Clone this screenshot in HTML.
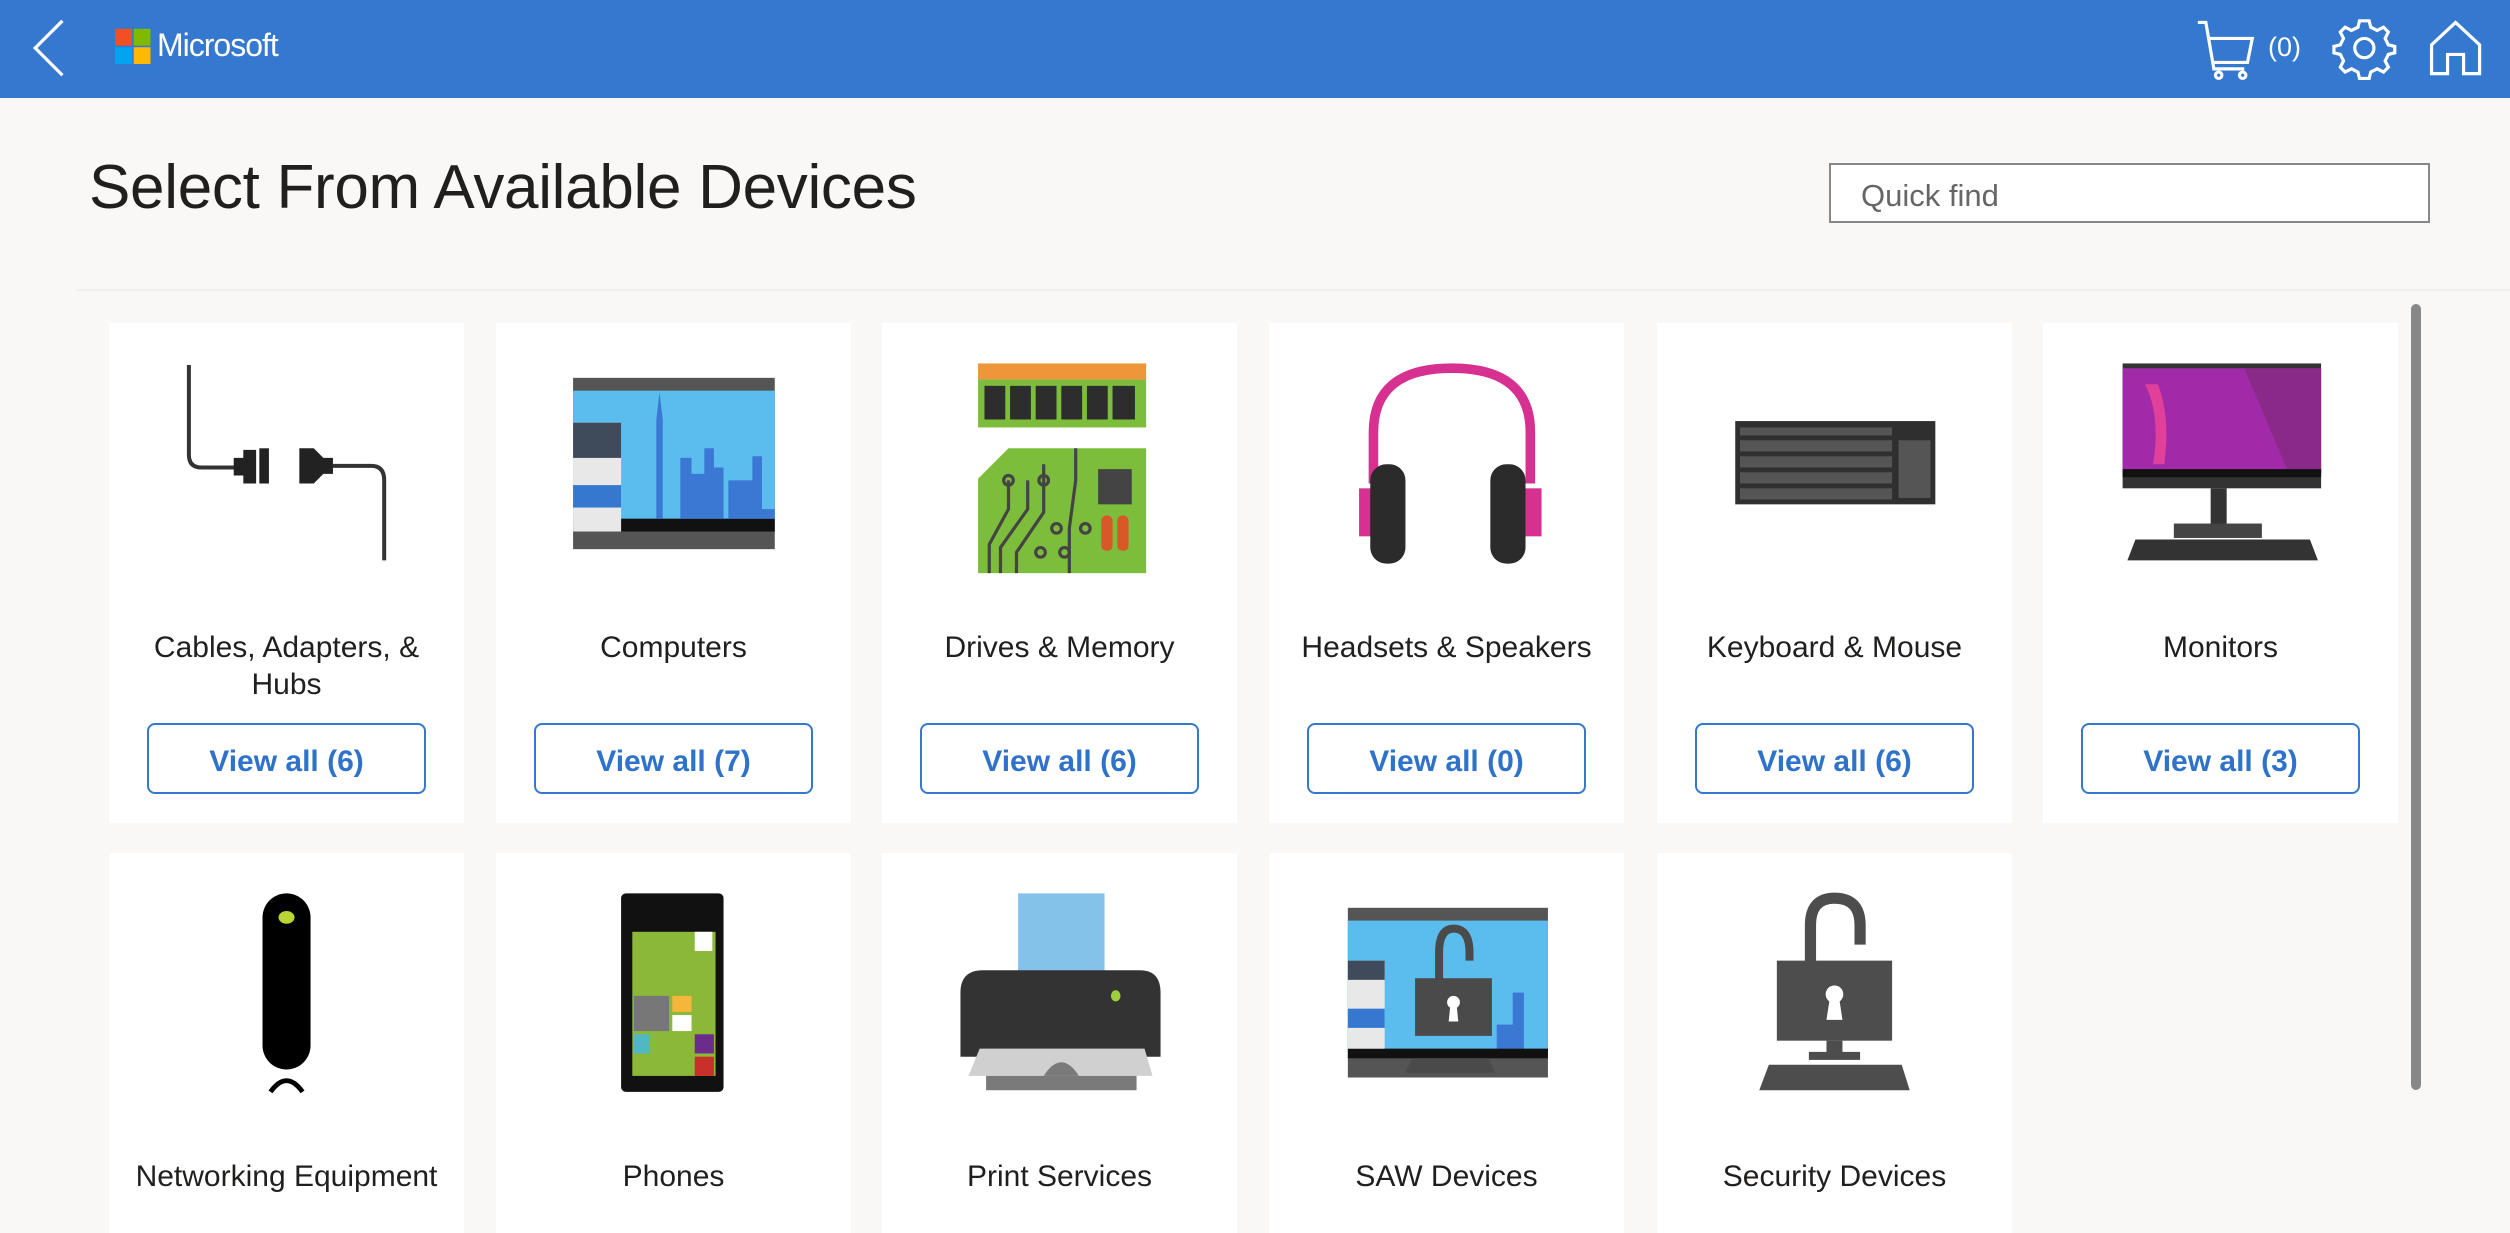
<!DOCTYPE html>
<html><head><meta charset="utf-8"><style>
*{margin:0;padding:0;box-sizing:border-box}
body{width:2510px;height:1228px;background:#f9f8f6;font-family:"Liberation Sans",sans-serif;position:relative;overflow:hidden}
.hdr{position:absolute;left:0;top:0;width:2510px;height:98px;background:#3578cf}
.ms{position:absolute;left:157px;top:27px;color:#fff;font-size:32px;letter-spacing:-1px}
.cnt{position:absolute;left:2268px;top:32px;color:#fff;font-size:27px}
h1{position:absolute;left:89px;top:152px;font-size:62px;font-weight:normal;color:#201f1e;letter-spacing:-0.3px}
.qf{position:absolute;left:1829px;top:163px;width:601px;height:60px;border:2px solid #888;background:#fff;color:#666;font-size:31px;padding:13px 0 0 30px}
.sep{position:absolute;left:76px;top:289px;width:2434px;height:2px;background:#efeeec}
.card{position:absolute;width:355px;background:#fff}
.lbl{position:absolute;left:0;width:355px;text-align:center;font-size:30px;color:#201f1e;line-height:37px}
.btn{position:absolute;left:38px;width:279px;height:71px;border:2px solid #3578cf;border-radius:8px;color:#2f72c9;font-size:30px;font-weight:bold;text-align:center;line-height:74px}
.sb{position:absolute;left:2411px;top:304px;width:10px;height:786px;background:#888;border-radius:5px}
svg.ov{position:absolute;left:0;top:0;width:2510px;height:1228px}
</style></head><body>
<div class="hdr"></div>
<div class="ms">Microsoft</div>
<div class="cnt">(0)</div>
<h1>Select From Available Devices</h1>
<div class="qf">Quick find</div>
<div class="sep"></div>

<div class="card" style="left:109px;top:323px;height:500px"><div class="lbl" style="top:306px">Cables, Adapters, &amp;<br>Hubs</div><div class="btn" style="top:400px">View all (6)</div></div>
<div class="card" style="left:496px;top:323px;height:500px"><div class="lbl" style="top:306px">Computers</div><div class="btn" style="top:400px">View all (7)</div></div>
<div class="card" style="left:882px;top:323px;height:500px"><div class="lbl" style="top:306px">Drives &amp; Memory</div><div class="btn" style="top:400px">View all (6)</div></div>
<div class="card" style="left:1269px;top:323px;height:500px"><div class="lbl" style="top:306px">Headsets &amp; Speakers</div><div class="btn" style="top:400px">View all (0)</div></div>
<div class="card" style="left:1657px;top:323px;height:500px"><div class="lbl" style="top:306px">Keyboard &amp; Mouse</div><div class="btn" style="top:400px">View all (6)</div></div>
<div class="card" style="left:2043px;top:323px;height:500px"><div class="lbl" style="top:306px">Monitors</div><div class="btn" style="top:400px">View all (3)</div></div>

<div class="card" style="left:109px;top:853px;height:380px"><div class="lbl" style="top:305px">Networking Equipment</div></div>
<div class="card" style="left:496px;top:853px;height:380px"><div class="lbl" style="top:305px">Phones</div></div>
<div class="card" style="left:882px;top:853px;height:380px"><div class="lbl" style="top:305px">Print Services</div></div>
<div class="card" style="left:1269px;top:853px;height:380px"><div class="lbl" style="top:305px">SAW Devices</div></div>
<div class="card" style="left:1657px;top:853px;height:380px"><div class="lbl" style="top:305px">Security Devices</div></div>
<div class="sb"></div>

<svg class="ov" viewBox="0 0 1568 767" preserveAspectRatio="none">
<path d="M39 13 L22 30 L39 47" fill="none" stroke="#fff" stroke-width="2"/>
<rect x="72" y="18" width="10.5" height="10.5" fill="#f25022"/><rect x="83.5" y="18" width="10.5" height="10.5" fill="#7fba00"/>
<rect x="72" y="29.5" width="10.5" height="10.5" fill="#00a4ef"/><rect x="83.5" y="29.5" width="10.5" height="10.5" fill="#ffb900"/>
<g fill="none" stroke="#fff" stroke-width="2">
<path d="M1373 14 H1378 L1383 43 H1402 M1380 24 H1407 L1404 39 H1382"/><circle cx="1386" cy="47" r="2"/><circle cx="1401" cy="47" r="2"/>
<circle cx="1477" cy="30" r="6"/>
<path d="M1477 13 l3 0 l1 4 l4 2 l4 -2 l3 3 l-2 4 l2 4 l4 1 l0 4 l-4 1 l-2 4 l2 4 l-3 3 l-4 -2 l-4 2 l-1 4 l-3 0 l-3 0 l-1 -4 l-4 -2 l-4 2 l-3 -3 l2 -4 l-2 -4 l-4 -1 l0 -4 l4 -1 l2 -4 l-2 -4 l3 -3 l4 2 l4 -2 l1 -4 z"/>
<path d="M1519 46 V28 L1534 14 L1549 28 V46 H1539 V34 H1529 V46 Z"/>
</g>
<g fill="none" stroke="#333" stroke-width="2.5"><path d="M118 228 V284 Q118 292 126 292 H150"/><path d="M208 291 H232 Q240 291 240 300 V350"/></g>
<path d="M146 286 H152 V281 H160 V302 H152 V297 H146 Z" fill="#222"/><rect x="162" y="280" width="6" height="22" fill="#222"/>
<path d="M187 280 H196 L202 286 H208 V296 H202 L196 302 H187 Z" fill="#222"/>
<rect x="358" y="236" width="126" height="107" fill="#555"/><rect x="358" y="244" width="126" height="80" fill="#5bbcee"/>
<rect x="358" y="324" width="126" height="8" fill="#111"/>
<path d="M410 324 V262 L412 245 L414 262 V324 Z M425 324 V286 H432 V296 H440 V280 H446 V292 H452 V324 Z M455 324 V300 H470 V285 H476 V318 H484 V324Z" fill="#3a78d4"/>
<rect x="358" y="264" width="30" height="68" fill="#e8e8e8"/><rect x="358" y="264" width="30" height="22" fill="#3f4a5a"/><rect x="358" y="303" width="30" height="14" fill="#3578cf"/>
<rect x="611" y="227" width="105" height="10" fill="#f0963a"/><rect x="611" y="237" width="105" height="30" fill="#7cbd3c"/>
<g fill="#2d2d2d"><rect x="615" y="241" width="13" height="21"/><rect x="631" y="241" width="13" height="21"/><rect x="647" y="241" width="13" height="21"/><rect x="663" y="241" width="13" height="21"/><rect x="679" y="241" width="13" height="21"/><rect x="695" y="241" width="14" height="21"/></g>
<path d="M630 280 H716 V358 H611 V299 Z" fill="#7cbd3c"/><rect x="686" y="293" width="21" height="22" fill="#444"/>
<rect x="688" y="322" width="7" height="22" rx="3" fill="#d8582a"/><rect x="698" y="322" width="7" height="22" rx="3" fill="#d8582a"/>
<g fill="none" stroke="#444" stroke-width="2"><path d="M618 358 V340 L630 318 V300"/><path d="M625 358 V342 L642 318 V300"/><path d="M635 358 V345 L652 320 V290"/><path d="M668 358 V330 L672 300 V280"/><circle cx="630" cy="300" r="3"/><circle cx="652" cy="300" r="3"/><circle cx="660" cy="330" r="3"/><circle cx="650" cy="345" r="3"/><circle cx="665" cy="345" r="3"/><circle cx="678" cy="330" r="3"/></g>
<path d="M858 302 V270 Q858 230 907 230 Q956 230 956 270 V302" fill="none" stroke="#d63190" stroke-width="6"/>
<rect x="849" y="305" width="10" height="30" fill="#d63190"/><rect x="953" y="305" width="10" height="30" fill="#d63190"/>
<rect x="856" y="290" width="22" height="62" rx="10" fill="#2b2b2b"/><rect x="931" y="290" width="22" height="62" rx="10" fill="#2b2b2b"/>
<rect x="1084" y="263" width="125" height="52" fill="#2f2f2f"/>
<g fill="#555"><rect x="1087" y="267" width="95" height="5"/><rect x="1087" y="275" width="95" height="7"/><rect x="1087" y="285" width="95" height="7"/><rect x="1087" y="295" width="95" height="7"/><rect x="1087" y="305" width="95" height="7"/><rect x="1186" y="275" width="20" height="36"/></g>
<rect x="1326" y="227" width="124" height="78" fill="#333"/><rect x="1326" y="230" width="124" height="66" fill="#a12aa8"/>
<path d="M1402 230 H1450 V296 H1430 Z" fill="#8a2a88"/><path d="M1340 240 Q1350 260 1345 290 L1352 290 Q1356 260 1348 240Z" fill="#e0409a"/>
<rect x="1326" y="293" width="124" height="5" fill="#111"/>
<rect x="1381" y="305" width="10" height="24" fill="#333"/><rect x="1358" y="327" width="55" height="9" fill="#444"/>
<path d="M1334 337 H1443 L1448 350 H1329 Z" fill="#333"/>
<rect x="164" y="558" width="30" height="110" rx="15" fill="#000"/><ellipse cx="179" cy="573" rx="5" ry="4" fill="#b9d534"/>
<path d="M169 682 Q179 668 189 682" fill="none" stroke="#000" stroke-width="3"/>
<rect x="388" y="558" width="64" height="124" rx="3" fill="#111"/>
<rect x="395" y="582" width="52" height="90" fill="#8cb83a"/>
<rect x="396" y="622" width="22" height="22" fill="#777"/><rect x="420" y="622" width="12" height="10" fill="#f5b73b"/><rect x="420" y="634" width="12" height="10" fill="#fff"/>
<rect x="434" y="582" width="11" height="12" fill="#fff"/><rect x="396" y="646" width="10" height="12" fill="#4fb8c0"/><rect x="434" y="646" width="12" height="12" fill="#6b2c8c"/><rect x="434" y="660" width="12" height="12" fill="#c8302a"/>
<rect x="636" y="558" width="54" height="60" fill="#84c2ea"/>
<path d="M600 620 Q600 606 614 606 H712 Q725 606 725 620 V660 H600 Z" fill="#333"/>
<ellipse cx="697" cy="622" rx="3" ry="3.5" fill="#9dcf3a"/>
<path d="M612 655 H715 L720 672 H605 Z" fill="#d0d0d0"/><path d="M616 672 H710 V681 H616 Z" fill="#7a7a7a"/><path d="M652 672 Q663 655 674 672Z" fill="#7a7a7a"/>
<rect x="842" y="567" width="125" height="106" fill="#555"/><rect x="842" y="575" width="125" height="80" fill="#5bbcee"/>
<path d="M935 655 V640 H945 V620 H952 V655 Z" fill="#3a78d4"/>
<rect x="842" y="655" width="125" height="6" fill="#111"/>
<rect x="842" y="600" width="23" height="55" fill="#e8e8e8"/><rect x="842" y="600" width="23" height="12" fill="#3f4a5a"/><rect x="842" y="630" width="23" height="12" fill="#3578cf"/>
<path d="M899 613 V595 Q899 580 908 580 Q918 580 918 595 V600" fill="none" stroke="#4a4a4a" stroke-width="5"/>
<rect x="884" y="611" width="48" height="36" fill="#4a4a4a"/><circle cx="908" cy="626" r="4" fill="#fff"/><path d="M906 628 H910 L911 638 H905Z" fill="#fff"/>
<path d="M882 661 H930 L934 670 H878Z" fill="#4a4a4a"/>
<path d="M1131 602 V578 Q1131 561 1146 561 Q1162 561 1162 578 V590" fill="none" stroke="#4d4d4d" stroke-width="7"/>
<rect x="1110" y="600" width="72" height="50" fill="#4d4d4d"/><circle cx="1146" cy="621" r="5.5" fill="#fff"/><path d="M1143 624 H1149 L1151 637 H1141Z" fill="#fff"/>
<rect x="1141" y="650" width="10" height="9" fill="#4d4d4d"/><rect x="1130" y="657" width="32" height="5" fill="#4d4d4d"/>
<path d="M1105 665 H1188 L1193 681 H1099 Z" fill="#4d4d4d"/>
</svg>
</body></html>
